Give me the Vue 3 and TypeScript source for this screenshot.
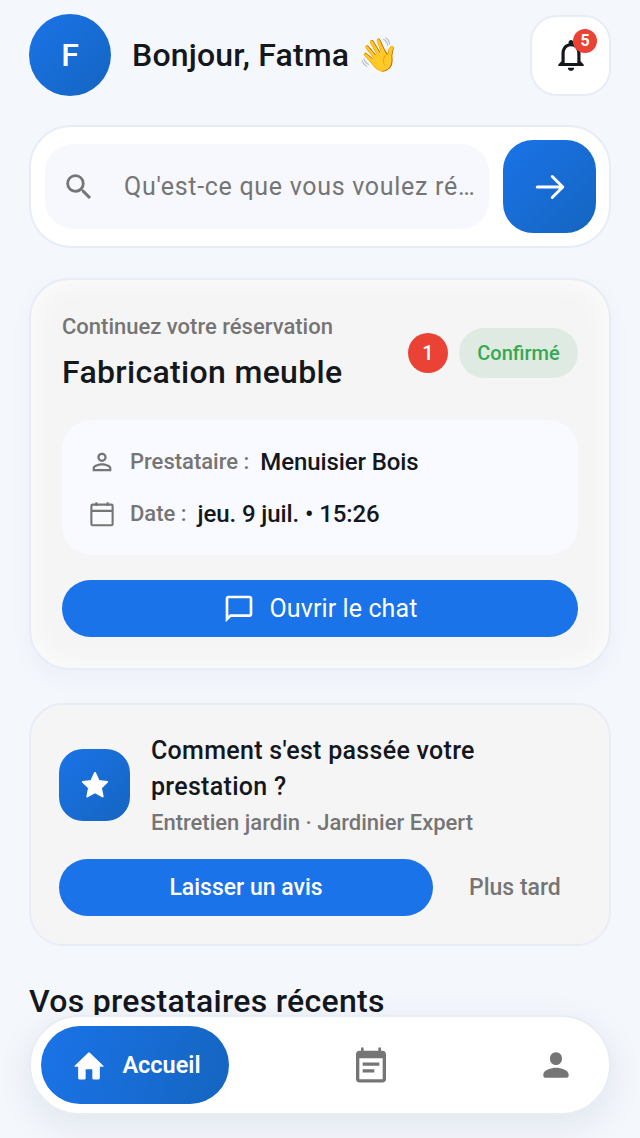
<script setup lang="ts">
interface NavItem { id: string; label?: string }
const nav: NavItem[] = [{ id: 'home', label: 'Accueil' }, { id: 'bookings' }, { id: 'profile' }]
</script>

<template>
  <div class="page">
    <header class="header">
      <div class="avatar">F</div>
      <h1 class="hello">Bonjour, Fatma <span class="wave">👋</span></h1>
      <button class="bell">
        <svg width="38" height="38" viewBox="0 0 24 24" fill="#14171c">
          <path d="M12 22c1.100 0 2-.9 2-2h-4c0 1.100.9 2 2 2zm6-6v-5c0-3.070-1.630-5.640-4.500-6.320V4c0-.83-.67-1.500-1.500-1.500s-1.500.67-1.500 1.500v.68C7.640 5.360 6 7.920 6 11v5l-2 2v1h16v-1l-2-2zm-2 1H8v-6c0-2.480 1.510-4.500 4-4.500s4 2.020 4 4.500v6z" />
        </svg>
        <span class="bell-badge">5</span>
      </button>
    </header>

    <section class="search">
      <div class="search-input">
        <svg width="34" height="34" viewBox="0 0 24 24" fill="#757575">
          <path d="M15.5 14h-.79l-.28-.27A6.47 6.47 0 0 0 16 9.5 6.5 6.5 0 1 0 9.5 16c1.61 0 3.09-.59 4.23-1.57l.27.28v.79l5 4.99L20.49 19l-4.99-5zm-6 0C7.01 14 5 11.99 5 9.5S7.01 5 9.5 5 14 7.01 14 9.5 11.99 14 9.5 14z" />
        </svg>
        <span class="placeholder">Qu'est-ce que vous voulez réserver ?</span>
      </div>
      <button class="go">
        <svg width="36" height="36" viewBox="0 0 24 24" fill="none" stroke="#fff" stroke-width="2" stroke-linecap="round" stroke-linejoin="round">
          <path d="M3.5 12h17M13.5 5l7 7-7 7" />
        </svg>
      </button>
    </section>

    <section class="booking">
      <div class="booking-head">
        <div class="booking-titles">
          <div class="eyebrow">Continuez votre réservation</div>
          <div class="booking-title">Fabrication meuble</div>
        </div>
        <span class="count">1</span>
        <span class="status">Confirmé</span>
      </div>
      <div class="details">
        <div class="detail">
          <svg class="detail-icon" width="28" height="28" viewBox="0 0 24 24" fill="#757575">
            <path d="M12 5.9a2.1 2.1 0 1 1 0 4.2 2.1 2.1 0 0 1 0-4.2m0 9c2.97 0 6.1 1.46 6.1 2.1v1.1H5.9V17c0-.64 3.13-2.1 6.1-2.1M12 4C9.79 4 8 5.79 8 8s1.79 4 4 4 4-1.79 4-4-1.79-4-4-4zm0 9c-2.67 0-8 1.34-8 4v3h16v-3c0-2.66-5.33-4-8-4z" />
          </svg>
          <span class="detail-label">Prestataire :</span>
          <span class="detail-value">Menuisier Bois</span>
        </div>
        <div class="detail">
          <svg class="detail-icon" width="30" height="30" viewBox="0 0 24 24" fill="none" stroke="#757575" stroke-width="1.7">
            <rect x="3.500" y="4.500" width="17" height="16.500" rx="1" />
            <path d="M3.500 9.500h17M7.500 2.500v3M16.500 2.500v3" />
          </svg>
          <span class="detail-label">Date :</span>
          <span class="detail-value">jeu. 9 juil. • 15:26</span>
        </div>
      </div>
      <button class="primary chat">
        <svg width="32" height="32" viewBox="0 0 24 24" fill="#fff">
          <path d="M20 2H4c-1.100 0-2 .9-2 2v18l4-4h14c1.100 0 2-.9 2-2V4c0-1.100-.9-2-2-2zm0 14H5.170L4 17.170V4h16v12z" />
        </svg>
        Ouvrir le chat
      </button>
    </section>

    <section class="review">
      <div class="review-top">
        <div class="star-tile">
          <svg width="34" height="34" viewBox="0 0 24 24" fill="#fff" stroke="#fff" stroke-width="1.4" stroke-linejoin="round">
            <path d="M12 3.500l2.600 5.600 6 .7-4.400 4.200 1.200 6.100L12 17.100l-5.400 3 1.200-6.100-4.400-4.200 6-.7z" />
          </svg>
        </div>
        <div class="review-text">
          <div class="review-title">Comment s'est passée votre prestation ?</div>
          <div class="review-sub">Entretien jardin · Jardinier Expert</div>
        </div>
      </div>
      <div class="review-actions">
        <button class="primary leave">Laisser un avis</button>
        <button class="later">Plus tard</button>
      </div>
    </section>

    <h2 class="recent">Vos prestataires récents</h2>

    <nav class="nav">
      <div v-for="item in nav" :key="item.id" class="nav-item" :class="{ active: item.label }">
        <svg v-if="item.id === 'home'" width="40" height="40" viewBox="0 0 24 24" fill="#fff">
          <path d="M10 20v-5.500h4V20c0 .4.3.7.7.7h3.100c.4 0 .7-.3.7-.7v-7h1.900c.3 0 .5-.4.2-.6l-8.100-7.800a.7.7 0 0 0-1 0l-8.100 7.800c-.3.2-.1.6.2.6h1.900v7c0 .4.3.7.7.7h3.100c.4 0 .7-.3.7-.7z" />
        </svg>
        <svg v-else-if="item.id === 'bookings'" width="40" height="40" viewBox="0 0 24 24" fill="#757575">
          <path d="M19 3.500h-1V2.200a.8.8 0 0 0-1.600 0v1.300H7.600V2.200a.8.8 0 0 0-1.600 0v1.300H5c-1.100 0-2 .9-2 2v15c0 1.100.9 2 2 2h14c1.100 0 2-.9 2-2v-15c0-1.100-.9-2-2-2zm0 17H5V8h14v12.500zM7 10.500h10v2H7zm0 4h7v2H7z" />
        </svg>
        <svg v-else width="38" height="38" viewBox="0 0 24 24" fill="#757575">
          <path d="M12 12c2.200 0 3.800-1.800 3.800-4S14.200 4 12 4 8.200 5.800 8.200 8s1.600 4 3.800 4zm0 1.800c-3 0-8 1.500-8 4.200v.8c0 .7.500 1.200 1.200 1.200h13.600c.7 0 1.200-.5 1.200-1.200V18c0-2.700-5-4.200-8-4.200z" />
        </svg>
        <span v-if="item.label" class="nav-label">{{ item.label }}</span>
      </div>
    </nav>
  </div>
</template>

<style>
body { margin: 0; background: #f4f7fc; }
</style>

<style scoped>
.page {
  position: relative;
  box-sizing: border-box;
  width: 640px;
  height: 1138px;
  overflow: hidden;
  padding: 14px 29px 0;
  background: #f4f7fc;
  color: #14171c;
  font-family: Roboto, "Noto Sans", sans-serif;
}
button { font-family: inherit; border: 0; padding: 0; cursor: pointer; }
svg { display: block; flex: none; }

.header { display: flex; align-items: center; height: 82px; }
.avatar {
  width: 82px; height: 82px; border-radius: 50%; flex: none;
  background: linear-gradient(135deg, #1a73e8, #1565c0);
  color: #fff; font-size: 32px; font-weight: 500;
  display: flex; align-items: center; justify-content: center;
}
.hello { margin: 0 0 0 21px; flex: 1; font-size: 32px; font-weight: 500; line-height: 82px; letter-spacing: 0.2px; }
.wave { font-size: 33px; margin-left: 1px; }
.bell {
  position: relative; width: 81px; height: 81px; border-radius: 27px; flex: none;
  background: #fff; border: 2px solid #e7edf6; box-sizing: border-box;
  display: flex; align-items: center; justify-content: center;
}
.bell-badge {
  position: absolute; top: 12px; right: 12px; width: 24px; height: 24px; border-radius: 50%;
  background: #ea4335; color: #fff; font-size: 16px; font-weight: 700;
  display: flex; align-items: center; justify-content: center;
}

.search {
  margin-top: 29px; height: 123px; box-sizing: border-box;
  background: #fff; border: 2px solid #e7edf6; border-radius: 42px;
  display: flex; align-items: center; gap: 14px; padding: 0 13px 0 14px;
}
.search-input {
  flex: 1; min-width: 0; height: 85px; border-radius: 28px; background: #f6f8fd;
  display: flex; align-items: center; gap: 28px; padding: 0 11px 0 17px;
}
.placeholder {
  flex: 1; min-width: 0; white-space: nowrap; overflow: hidden; text-overflow: ellipsis;
  font-size: 25px; color: #757575; letter-spacing: 0.7px;
}
.go {
  width: 93px; height: 93px; border-radius: 30px; flex: none;
  background: linear-gradient(135deg, #1a73e8, #1565c0);
  display: flex; align-items: center; justify-content: center;
}

.booking {
  margin-top: 30px; height: 392px; box-sizing: border-box;
  border: 2px solid #e7edf6; border-radius: 40px; background: #f5f5f5;
  box-shadow: inset 0 0 30px rgba(255,255,255,.85), 0 8px 24px rgba(26,60,120,.04);
  padding: 34px 31px 0;
}
.booking-head { display: flex; align-items: center; height: 78px; }
.booking-titles { flex: 1; }
.eyebrow { font-size: 22px; font-weight: 500; color: #757575; line-height: 24px; }
.booking-title { font-size: 32px; font-weight: 500; line-height: 40px; margin-top: 13px; letter-spacing: 0.33px; }
.count {
  width: 40px; height: 40px; border-radius: 50%; background: #ea4335; color: #fff;
  font-size: 20px; font-weight: 500; display: flex; align-items: center; justify-content: center;
  margin-right: 11px;
}
.status {
  width: 119px; height: 50px; border-radius: 25px; background: #dfebe2; color: #34a853;
  font-size: 20px; font-weight: 500; display: flex; align-items: center; justify-content: center;
}
.details {
  margin-top: 28px; height: 135px; border-radius: 30px; background: #f8faff;
  box-sizing: border-box; padding: 16px 25px; display: flex; flex-direction: column; justify-content: center; gap: 20px;
}
.detail { display: flex; align-items: center; height: 32px; }
.detail-icon { width: 30px; margin-right: 13px; }
.detail-label { font-size: 22px; font-weight: 500; color: #757575; margin-right: 11px; }
.detail-value { font-size: 24px; font-weight: 500; letter-spacing: -0.1px; }

.primary { background: #1a73e8; color: #fff; border-radius: 29px; height: 57px; }
.chat {
  margin-top: 25px; width: 100%; font-size: 25px; letter-spacing: 0.1px; display: flex; align-items: center; justify-content: center; gap: 15px;
}

.review {
  margin-top: 33px; height: 243px; box-sizing: border-box;
  border: 2px solid #e7edf6; border-radius: 34px; background: #f5f5f5;
  padding: 28px 28px 0;
}
.review-top { display: flex; align-items: center; gap: 21px; }
.star-tile {
  width: 71px; height: 72px; border-radius: 24px; flex: none;
  background: linear-gradient(135deg, #1a73e8, #1565c0);
  display: flex; align-items: center; justify-content: center;
}
.review-title { font-size: 25px; font-weight: 500; line-height: 36px; letter-spacing: 0.3px; }
.review-sub { font-size: 22px; font-weight: 500; color: #757575; line-height: 28px; margin-top: 4px; }
.review-actions { margin-top: 22px; display: flex; align-items: center; }
.leave { width: 374px; font-size: 23px; font-weight: 500; }
.later { margin-left: 36px; background: none; color: #757575; font-size: 23px; font-weight: 500; }

.recent { margin: 37px 0 0; font-size: 32px; font-weight: 500; line-height: 36px; letter-spacing: 0.3px; }

.nav {
  position: absolute; left: 29px; top: 1015px; width: 582px; height: 100px; box-sizing: border-box;
  background: #fff; border: 2px solid #e7edf6; border-radius: 50px;
  box-shadow: 0 10px 36px rgba(26,50,90,.09);
  display: flex; align-items: center; justify-content: space-between; padding: 0 34px 0 10px;
}
.nav-item { display: flex; align-items: center; justify-content: center; }
.nav-item:nth-child(2) { margin-right: 24px; }
.nav-item.active {
  width: 188px; height: 78px; border-radius: 39px; gap: 13px;
  background: linear-gradient(105deg, #1a73e8, #1565c0);
}
.nav-label { color: #fff; font-size: 23.500px; font-weight: 600; }
</style>
